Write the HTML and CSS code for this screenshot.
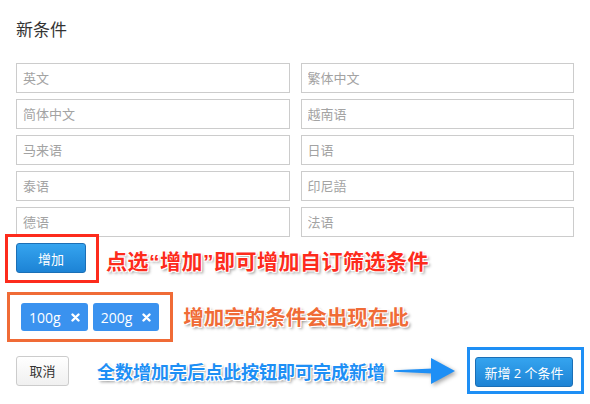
FILE: index.html
```html
<!DOCTYPE html>
<html lang="zh-CN">

<head>
  <meta charset="UTF-8">
  <meta name="viewport" content="width=device-width, initial-scale=1.0">
  <title>新条件</title>
  <link rel="stylesheet" href="styles.css">
</head>

<body>
  <div class="container">
    <h1 class="title">新条件</h1>

    <div class="fields">
      <input type="text" placeholder="英文">
      <input type="text" placeholder="繁体中文">
      <input type="text" placeholder="简体中文">
      <input type="text" placeholder="越南语">
      <input type="text" placeholder="马来语">
      <input type="text" placeholder="日语">
      <input type="text" placeholder="泰语">
      <input type="text" placeholder="印尼語">
      <input type="text" placeholder="德语">
      <input type="text" placeholder="法语">
    </div>

    <div class="row row-add">
      <div class="mark mark-red">
        <button class="btn btn-blue btn-add">增加</button>
      </div>
      <span class="note note-red">点选“增加”即可增加自订筛选条件</span>
    </div>

    <div class="row row-tags">
      <div class="mark mark-orange tags">
        <span class="tag">100g
          <svg class="tag-x" width="9" height="9" viewBox="0 0 9 9"><path d="M1.5 1.5L7.5 7.5M7.5 1.5L1.5 7.5" stroke="#fff" stroke-width="2.4" stroke-linecap="round" /></svg>
        </span>
        <span class="tag">200g
          <svg class="tag-x" width="9" height="9" viewBox="0 0 9 9"><path d="M1.5 1.5L7.5 7.5M7.5 1.5L1.5 7.5" stroke="#fff" stroke-width="2.4" stroke-linecap="round" /></svg>
        </span>
      </div>
      <span class="note note-orange">增加完的条件会出现在此</span>
    </div>

    <div class="row row-foot">
      <button class="btn btn-cancel">取消</button>
      <span class="note note-blue">全数增加完后点此按钮即可完成新增</span>
      <svg class="arrow" width="64" height="30" viewBox="0 0 64 30">
        <path d="M1 14.2L40 12.5L40 17.5L1 15.8Z" fill="#1e8ff5" />
        <path d="M38 2L62 15L38 28Z" fill="#1e8ff5" />
      </svg>
      <div class="mark mark-blue">
        <button class="btn btn-blue btn-submit">新增 2 个条件</button>
      </div>
    </div>
  </div>
</body>

</html>
```

FILE: styles.css
```css
* {
  margin: 0;
  padding: 0;
  box-sizing: border-box;
  font-family: 'Open Sans', 'Noto Sans CJK SC', sans-serif;
}

body {
  background: #fff;
}

.container {
  width: 590px;
  padding: 16px 16px 0;
}

.title {
  font-size: 17px;
  font-weight: normal;
  color: #333;
  line-height: 28px;
  margin-bottom: 19px;
}

/* 输入框 */
.fields {
  display: grid;
  grid-template-columns: 1fr 1fr;
  column-gap: 11px;
  row-gap: 6px;
}

.fields input {
  height: 30px;
  border: 1px solid #ccc;
  padding: 0 6px;
  font-size: 13px;
  color: #333;
  outline: none;
}

.fields input::placeholder {
  color: #a3a3a3;
}

.row {
  display: flex;
  align-items: center;
}

/* 标注框 */
.mark {
  border: 3px solid;
  background: #fff;
}

.mark-red {
  border-color: #fd2b1c;
  margin: -3px 0 0 -11px;
  padding: 6px 10px 7px 8px;
}

.mark-orange {
  border-color: #f06b36;
  margin: 9px 0 0 -9px;
  padding: 8px 11px 8px 11px;
}

.mark-blue {
  border-color: #1e8ff5;
  margin-right: -10px;
  padding: 7px 8px 4px 5px;
}

/* 按钮 */
.btn {
  height: 30px;
  font-size: 13px;
  border-radius: 3px;
  cursor: pointer;
}

.btn-blue {
  color: #fff;
  border: 1px solid #1b6fb6;
  background: linear-gradient(#35a4ef, #1d83d5);
}

.btn-add {
  width: 70px;
}

.btn-submit {
  width: 98px;
}

.btn-cancel {
  width: 53px;
  color: #333;
  border: 1px solid #ccc;
  background: linear-gradient(#fff, #f0f0f0);
}

/* 标签 */
.tags {
  display: flex;
  gap: 5px;
}

.tag {
  display: inline-flex;
  align-items: center;
  height: 28px;
  padding: 0 8px 0 8px;
  background: #3a92ef;
  border-radius: 3px;
  color: #fff;
  font-size: 14px;
}

.tag-x {
  margin-left: 10px;
}

/* 说明文字 */
.note {
  font-family: 'Noto Sans CJK SC', sans-serif;
  font-weight: bold;
  text-shadow: 1px 1px 0 #fff, -1px -1px 0 #fff, 1px -1px 0 #fff, -1px 1px 0 #fff, 2px 2px 3px rgba(0, 0, 0, 0.45);
}

.note-red {
  font-family: 'Liberation Sans', 'Noto Sans CJK SC', sans-serif;
  color: #fd2b1c;
  font-size: 21px;
  letter-spacing: 0.5px;
  margin-left: 7px;
}

.note-orange {
  color: #f06b36;
  font-size: 20.5px;
  margin: 6px 0 0 10px;
}

.note-blue {
  color: #1e8ff5;
  font-size: 18px;
  margin-left: 28px;
}

.row-foot {
  margin-top: 5px;
}

.arrow {
  margin: 0 8px 0 8px;
  filter: drop-shadow(2px 2px 2px rgba(0, 0, 0, 0.35));
}

.row-foot .mark-blue {
  margin-left: auto;
}
```
